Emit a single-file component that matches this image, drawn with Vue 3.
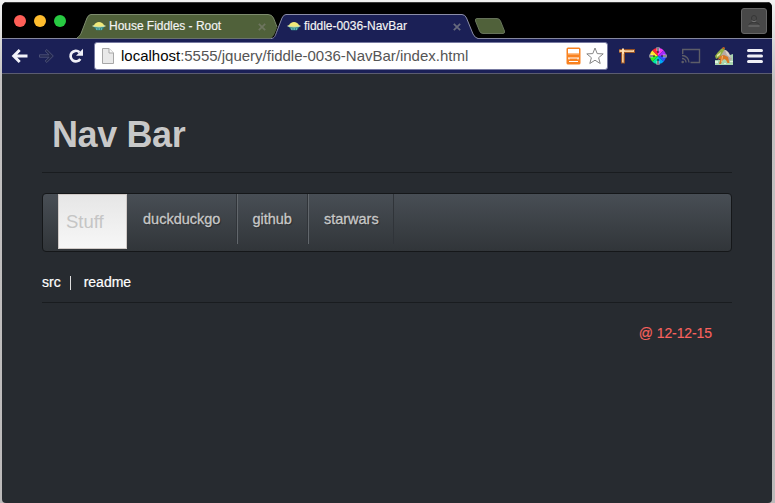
<script setup>
const tabs = [
  { title: 'House Fiddles - Root', active: false },
  { title: 'fiddle-0036-NavBar', active: true },
]
const links = ['duckduckgo', 'github', 'starwars']
</script>

<template>
  <div class="desktop">
    <div class="window">
      <header class="tabstrip">
        <div class="lights"><i class="red"></i><i class="amber"></i><i class="green"></i></div>
        <div class="tabs">
          <div v-for="t in tabs" :key="t.title" class="tab" :class="{ active: t.active }">
            <svg v-if="t.active" class="shape" width="207" height="26" viewBox="0 0 207 26">
              <path d="M0 26V24.500C4 24 4 22 6 17L11 4Q12.500 .5 15 .5H191Q194 .5 195.500 4L202 20Q204 24 207 24.500V26Z" fill="#1b2056" />
              <path d="M0 24.500C4 24 4 22 6 17L11 4Q12.500 .5 15 .5H191Q194 .5 195.500 4L202 20Q204 24 207 24.500" fill="none" stroke="#8b8da8" />
            </svg>
            <svg v-else class="shape" width="207" height="25" viewBox="0 0 207 25">
              <path d="M0 24.500C3 22 4 20 5 17L10 4Q11.500 .5 14 .5H191Q195 .5 196.500 4L200 14L197 21L194 24.500Z" fill="#50613a" />
              <path d="M0 24C3 22 4 20 5 17L10 4Q11.500 .5 14 .5H191Q195 .5 196.500 4L200 13" fill="none" stroke="#7e8c6e" />
            </svg>
            <svg class="fav" width="14" height="10" viewBox="0 0 14 10">
              <path d="M1.500 5.500H12.500L10 9.300H4.500Z" fill="#2f8a8c" />
              <path d="M4 8H10" stroke="#b9e4df" stroke-width=".8" stroke-dasharray="1.500 1" />
              <ellipse cx="7" cy="5" rx="6.800" ry="1.400" fill="#c8dcae" />
              <path d="M1.800 4.800C2.600 2 5 .9 7 .9s4.400 1.100 5.200 3.900Q7 6.300 1.800 4.800Z" fill="#f0e979" />
            </svg>
            <span class="title">{{ t.title }}</span>
            <svg class="close" width="8" height="8" viewBox="0 0 8 8"><path d="M.8.8 7.200 7.200M7.200.8.8 7.200" stroke="currentColor" stroke-width="1.700" /></svg>
          </div>
          <svg class="newtab" width="32" height="18" viewBox="0 0 32 18">
            <path d="M3 1.500H23Q25.500 1.500 26.500 4L30.500 14Q31 16.500 29 16.500H9Q6.500 16.500 5.500 14L1.500 4Q.8 1.500 3 1.500Z" fill="#50613a" stroke="#75836a" stroke-width=".8" />
          </svg>
        </div>
        <div class="profile">
          <svg width="14" height="14" viewBox="0 0 14 14" fill="none" stroke-width="1">
            <path d="M4.500 4a2.500 2.500 0 0 1 5 0c0 4-5 4-5 0M1.500 10.500Q3 9 5 8.700h4q2 .3 3.500 1.800" stroke="#363636" />
            <path d="M4.800 6.800Q7 8.800 9.200 6.800M1.500 12H12.500" stroke="#777" />
          </svg>
        </div>
      </header>

      <div class="toolbar">
        <svg class="nav" width="86" height="24" viewBox="0 0 86 24" fill="none">
          <path d="M11.700 6 5.700 12l6 6M6 12h13.500" stroke="#f3f3fa" stroke-width="2.900" />
          <path d="M31.500 10.800h9.500L37.200 7l1.600-1.500 6.500 6.500-6.500 6.500-1.600-1.500 3.800-3.800h-9.500Z" fill="#22274f" stroke="#4a4f76" stroke-width="1" />
          <path d="M71.500 8.200A5.300 5.300 0 1 0 72.300 15" stroke="#f0f0f7" stroke-width="2.700" />
          <path d="M75 4.800v7h-7Z" fill="#f0f0f7" />
        </svg>
        <div class="omnibox">
          <svg class="page" width="12" height="16" viewBox="0 0 12 16">
            <path d="M.5.500H7L11.500 5V15.500H.5Z" fill="#e9e9e9" stroke="#a7a7a7" />
            <path d="M7 .5V5h4.500" fill="#fafafa" stroke="#a7a7a7" />
          </svg>
          <span class="url"><b>localhost</b>:5555/jquery/fiddle-0036-NavBar/index.html</span>
          <svg class="reader" width="15" height="18" viewBox="0 0 15 18">
            <rect x=".5" y=".5" width="14" height="17" rx="1.500" fill="#f98220" />
            <path d="M2 2h11v4H2z" fill="#fff" />
            <path d="M2 6h11v1.500H2z" fill="#ffc08a" />
            <path d="M2 11h11M3 11v1.500M12 11v1.500M3 14.500h9" stroke="#fff" fill="none" />
          </svg>
          <svg class="star" width="18" height="18" viewBox="0 0 18 18"><path d="M9 1 11.200 6.600 17.200 6.900 12.600 10.700 14.200 16.500 9 13.200 3.800 16.500 5.400 10.700.8 6.900 6.800 6.600Z" fill="#fff" stroke="#858585" /></svg>
        </div>
        <div class="extensions">
          <svg width="18" height="20" viewBox="0 0 18 20">
            <path d="M1 3h16v4H7v10.500H3V7H1Z" fill="#955125" />
            <path d="M1.500 4H16v2H6v10.500H4V6H1.500Z" fill="#f5cd9c" />
            <path d="M4 2.500h2v5H4z" fill="#ffe0b5" />
            <path d="M8 4v1m2-1v1m2-1v1m2-1v1M5 9h1m-1 2h1m-1 2h1m-1 2h1" stroke="#b98250" stroke-width=".8" />
          </svg>
          <svg width="18" height="20" viewBox="0 0 18 20">
            <g transform="translate(9 10)">
              <path d="M0 0V-8A8 8 0 0 1 5.700-5.700Z" fill="#f43af4" />
              <path d="M0 0 5.700-5.700A8 8 0 0 1 8 0Z" fill="#a52aff" />
              <path d="M0 0H8A8 8 0 0 1 5.700 5.700Z" fill="#3151ff" />
              <path d="M0 0 5.700 5.700A8 8 0 0 1 0 8Z" fill="#00a7f5" />
              <path d="M0 0V8A8 8 0 0 1-5.700 5.700Z" fill="#00e6a5" />
              <path d="M0 0-5.700 5.700A8 8 0 0 1-8 0Z" fill="#35ef23" />
              <path d="M0 0H-8A8 8 0 0 1-5.700-5.700Z" fill="#ffe52a" />
              <path d="M0 0-5.700-5.700A8 8 0 0 1 0-8Z" fill="#ff273b" />
              <path d="M0-9v4M0 5v4M-9 0h4M5 0h4" stroke="#fff" stroke-width="2.600" />
              <path d="M0-9v6M0 3v6M-9 0h6M3 0h6" stroke="#17172b" stroke-width="1.100" />
            </g>
          </svg>
          <svg width="20" height="20" viewBox="0 0 20 20" fill="none" stroke="#5d5d68" stroke-width="1.400">
            <path d="M1.700 8V3.500h16.800v13H9.500M1 9.500a7 7 0 0 1 7 7M1 12.500a4 4 0 0 1 4 4" /><circle cx="1.700" cy="16" r=".6" />
          </svg>
          <svg width="20" height="20" viewBox="0 0 20 20">
            <path d="M1 14h5l7-4 6-2v11H1Z" fill="#a9d5b0" />
            <path d="M8 4h4l3 3 3 6-2 2-6-4-5-2Z" fill="#b5aaa5" />
            <path d="m11 4 3 2 3 6-4-3Z" fill="#dcd2ca" />
            <path d="M1 10 4 6l3-3 3-2 1 2-2 3-3 5-4 2Z" fill="#8fae42" />
            <path d="m3 9 4-3-1 3-3 2Z" fill="#e6e5a6" />
            <path d="m6 10 4-1 4 2 1.500 6h-2l-1.500-3-2-1-2 2-1 3H5l1.500-5-3 1Z" fill="#d97824" />
            <path d="m8.500 10-1 6" fill="none" stroke="#ffc783" stroke-width=".8" />
            <circle cx="9.500" cy="2.200" r="1.100" fill="#c4501f" />
            <path d="M1 15h3v2H1zM16 15h3v1h-3zM10 17h2v1h-2z" fill="#e1f3df" />
          </svg>
          <svg width="16" height="20" viewBox="0 0 16 20"><path d="M1.500 4.500h13M1.500 10h13M1.500 15.500h13" stroke="#f0f0f6" stroke-width="3" stroke-linecap="round" /></svg>
        </div>
      </div>

      <main class="content">
        <h1>Nav Bar</h1>
        <nav class="navbar">
          <a class="brand">Stuff</a>
          <a v-for="l in links" :key="l" class="item">{{ l }}</a>
        </nav>
        <div class="links"><a>src</a><i></i><a>readme</a></div>
        <footer>@ 12-12-15</footer>
      </main>
    </div>
  </div>
</template>

<style>
body { background: #c5c5c5; }
</style>

<style scoped>
* { box-sizing: border-box; }
.desktop {
  width: 775px; height: 503px; padding: 2px 3px 0 2px; overflow: hidden;
  background: linear-gradient(#f2f2f2, #c3c1c1 80px, #bcbaba);
  font-family: "Liberation Sans", Arial, sans-serif;
}
.window { height: 501px; border-radius: 5px 5px 4px 4px; overflow: hidden; background: #272b30; display: flex; flex-direction: column; }
svg { display: block; flex: none; }
.tabstrip { position: relative; z-index: 1; height: 36px; background: #000; border-top: 1px solid #3a3a3a; display: flex; flex: none; }
.lights { display: flex; gap: 8px; padding: 12px 0 0 12px; width: 75px; flex: none; }
.lights i { width: 12px; height: 12px; border-radius: 50%; }
.red { background: #ff5f57; }
.amber { background: #ffbd2e; }
.green { background: #28ca42; }
.tabs { display: flex; padding-top: 11px; }
.tab { position: relative; z-index: 0; width: 207px; height: 25px; display: flex; align-items: center; padding: 0 18px 2px 15px; color: #f4f4f4; font-size: 12px; -webkit-text-stroke: .15px currentColor; }
.tab.active { z-index: 1; margin-left: -13px; height: 26px; padding: 0 17px 3px 16px; }
.shape { position: absolute; left: 0; top: 0; z-index: -1; }
.fav { margin: 1px 3px 0 0; }
.title { flex: 1; white-space: nowrap; letter-spacing: -.03px; }
.close { margin-top: 2px; color: #6e755f; }
.active .close { color: #676a7d; }
.newtab { margin: 3px 0 0 -4px; }
.profile { width: 26px; height: 26px; margin: 5px 5px 0 auto; border: 1px solid #666; border-radius: 3px; background: #484848; display: flex; align-items: center; justify-content: center; }
.toolbar { height: 36px; flex: none; background: #1b2056; border-top: 1px solid #85879f; border-bottom: 1px solid #5b5c70; display: flex; align-items: center; padding-left: 6px; }
.omnibox { width: 514px; height: 28px; background: #fff; border: 1px solid #777aa1; border-radius: 3px; display: flex; align-items: center; padding: 0 3px 1px 7px; flex: none; }
.url { margin-left: 7px; flex: 1; font-size: 15px; letter-spacing: -.01px; color: #555; white-space: nowrap; }
.url b { color: #050505; font-weight: 400; }
.reader { margin-right: 5px; }
.extensions { flex: 1; display: flex; justify-content: space-between; align-items: center; padding: 0 9px 1px 10px; }
.content { padding: 34px 40px 0; flex: 1; }
h1 { margin: 0 0 20px; height: 65px; padding-left: 10px; border-bottom: 1px solid #191c1f; font-size: 36px; line-height: 54px; letter-spacing: -.4px; color: #c8c8c8; text-shadow: 0 0 1px rgba(0,0,0,.3); }
.navbar { height: 59px; border: 1px solid #151719; border-radius: 4px; background: linear-gradient(#484e55, #3a3f44 60%, #313539); display: flex; padding-left: 15px; }
.brand { width: 69px; height: 55px; padding-left: 7px; border: 1px solid #d0cac7; background: linear-gradient(#e6e6e6, #f7f7f7); color: #c5c5c5; font-size: 18.500px; line-height: 53px; }
.item { height: 50px; line-height: 50px; padding: 0 15px; font-size: 14.500px; color: #c8c8c8; -webkit-text-stroke: .3px currentColor; text-shadow: 1px 1px 1px rgba(0,0,0,.4); border-right: 1px solid #303439; border-left: 1px solid #62676c; }
.brand + .item { border-left-color: transparent; padding-right: 16px; }
.item:last-child { padding-right: 14px; }
.item:nth-child(3) { padding-left: 14px; }
.links { height: 51px; padding-top: 20px; display: flex; align-items: flex-start; font-size: 14px; line-height: 20px; color: #fff; -webkit-text-stroke: .2px currentColor; border-bottom: 1px solid #191c1f; }
.links i { width: 1px; height: 14px; background: #ddd; margin: 4px 13px 0 9px; }
footer { padding: 20px 20px 0 0; text-align: right; font-size: 14px; letter-spacing: -.1px; line-height: 20px; color: #f9625e; -webkit-text-stroke: .15px currentColor; }
</style>
